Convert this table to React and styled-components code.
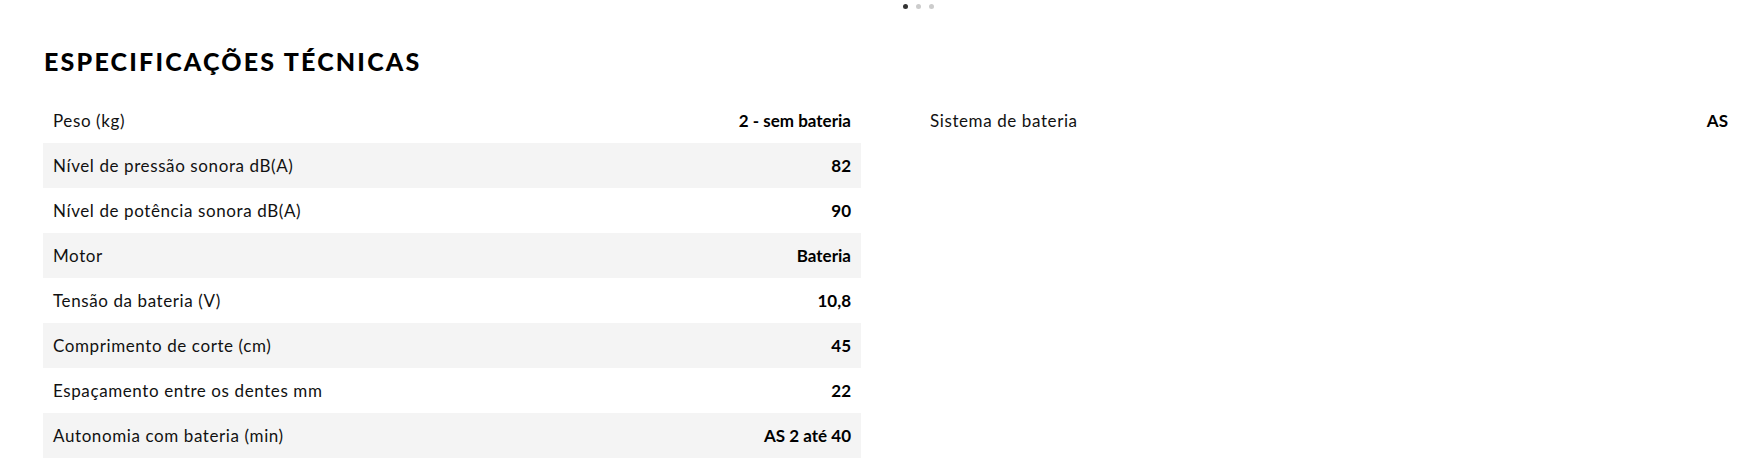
import React from "react";
import styled, { createGlobalStyle } from "styled-components";

const Global = createGlobalStyle`
  html, body { margin: 0; padding: 0; background: #fff; }
  body { font-family: Lato, "Noto Sans", sans-serif; color: #000; }
`;

const Page = styled.div`
  width: 1763px;
  box-sizing: border-box;
  padding: 0 25px 16px 43px;
`;

const Dots = styled.div`
  display: flex;
  justify-content: center;
  gap: 8px;
  padding: 4px 0 0 55px;
  height: 5px;
`;

const Dot = styled.span`
  width: 5px;
  height: 5px;
  border-radius: 50%;
  background: ${(p) => (p.$active ? "#333333" : "#cccccc")};
`;

const Title = styled.h2`
  margin: 37px 0 0 1px;
  font-family: Lato, sans-serif;
  font-weight: 900;
  font-size: 25px;
  line-height: 30px;
  letter-spacing: 2.2px;
  text-transform: uppercase;
  color: #000;
`;

const Columns = styled.div`
  display: grid;
  grid-template-columns: 818px 818px;
  column-gap: 59px;
  margin-top: 22px;
  align-items: start;
`;

const Table = styled.div`
  display: flex;
  flex-direction: column;
`;

const Row = styled.div`
  display: flex;
  justify-content: space-between;
  align-items: center;
  height: 45px;
  padding: 0 10px;
  box-sizing: border-box;
  background: ${(p) => (p.$shaded ? "#f4f4f4" : "#ffffff")};
`;

const Label = styled.span`
  font-size: 17px;
  font-weight: 400;
  letter-spacing: 0.6px;
  color: #111;
`;

const Value = styled.span`
  font-size: 17px;
  font-weight: 700;
  color: #000;
`;

const left = [
  ["Peso (kg)", "2 - sem bateria"],
  ["Nível de pressão sonora dB(A)", "82"],
  ["Nível de potência sonora dB(A)", "90"],
  ["Motor", "Bateria"],
  ["Tensão da bateria (V)", "10,8"],
  ["Comprimento de corte (cm)", "45"],
  ["Espaçamento entre os dentes mm", "22"],
  ["Autonomia com bateria (min)", "AS 2 até 40"],
];

const right = [["Sistema de bateria", "AS"]];

export default function App() {
  return (
    <>
      <Global />
      <Page>
        <Dots>
          <Dot $active />
          <Dot />
          <Dot />
        </Dots>
        <Title>Especificações técnicas</Title>
        <Columns>
          <Table>
            {left.map(([l, v], i) => (
              <Row key={l} $shaded={i % 2 === 1}>
                <Label>{l}</Label>
                <Value>{v}</Value>
              </Row>
            ))}
          </Table>
          <Table>
            {right.map(([l, v], i) => (
              <Row key={l} $shaded={i % 2 === 1}>
                <Label>{l}</Label>
                <Value>{v}</Value>
              </Row>
            ))}
          </Table>
        </Columns>
      </Page>
    </>
  );
}
